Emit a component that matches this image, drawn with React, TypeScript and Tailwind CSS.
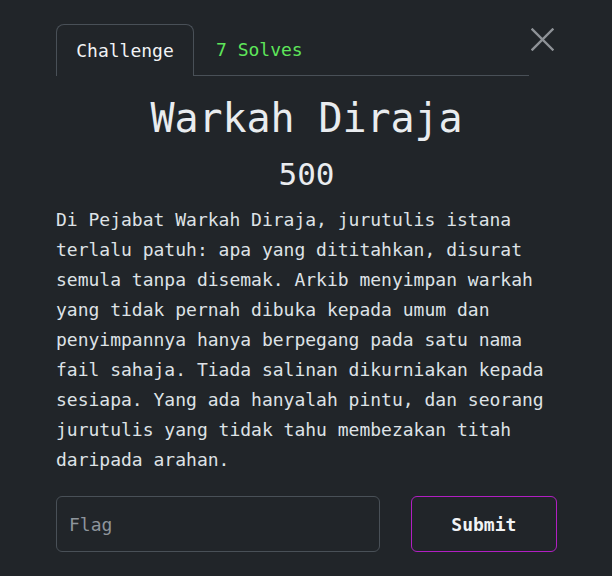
const mono = { fontFamily: '"DejaVu Sans Mono", monospace' };

function CloseIcon() {
    return (
        <svg width="23" height="23" viewBox="0 0 23 23" fill="none">
            <path d="M1.5 1.5 L21.5 21.5 M21.5 1.5 L1.5 21.5" stroke="#8e9297" strokeWidth="2.4" strokeLinecap="square" />
        </svg>
    );
}

export default function App() {
    return (
        <div className="w-[612px] h-[576px] bg-[#212529] text-[#dee2e6] overflow-hidden" style={mono}>
            <div className="w-[501px] ml-[56px] pt-[24px]">
                {/* Tabs */}
                <div className="relative flex">
                    <ul className="flex w-[473px] border-b border-[#495057]">
                        <li className="-mb-px h-[52px] w-[138px] flex items-center justify-center rounded-t-lg border border-b-0 border-[#495057] bg-[#212529] text-[18px] text-[#f1f3f5]">
                            Challenge
                        </li>
                        <li className="h-[51px] flex items-center pl-[22px] text-[18px] text-[#5ee65a]">
                            7 Solves
                        </li>
                    </ul>
                    <button className="absolute right-[3px] top-[4px] p-0">
                        <CloseIcon />
                    </button>
                </div>

                {/* Body */}
                <h1 className="mt-[18px] text-center text-[40px] leading-[48px] tracking-[-0.1px] text-[#e9ecef]">
                    Warkah Diraja
                </h1>
                <div className="mt-[12px] text-center text-[31px] leading-[40px] text-[#e9ecef]">500</div>
                <p className="mt-[11px] text-[18px] leading-[30px] text-[#dee2e6]">
                    Di Pejabat Warkah Diraja, jurutulis istana terlalu patuh: apa yang dititahkan, disurat semula tanpa disemak. Arkib menyimpan warkah yang tidak pernah dibuka kepada umum dan penyimpannya hanya berpegang pada satu nama fail sahaja. Tiada salinan dikurniakan kepada sesiapa. Yang ada hanyalah pintu, dan seorang jurutulis yang tidak tahu membezakan titah daripada arahan.
                </p>

                {/* Flag form */}
                <div className="mt-[21px] flex gap-[31px]">
                    <input
                        placeholder="Flag"
                        className="h-[56px] w-[325px] rounded-md border border-[#495057] bg-transparent px-[12px] text-[18px] text-[#dee2e6] placeholder:text-[#8e959c] outline-none"
                        style={mono}
                    />
                    <button
                        className="h-[56px] w-[147px] rounded-md border border-[#b11fc2] bg-transparent text-[18px] font-bold text-[#f1f3f5]"
                        style={mono}
                    >
                        Submit
                    </button>
                </div>
            </div>
        </div>
    );
}
